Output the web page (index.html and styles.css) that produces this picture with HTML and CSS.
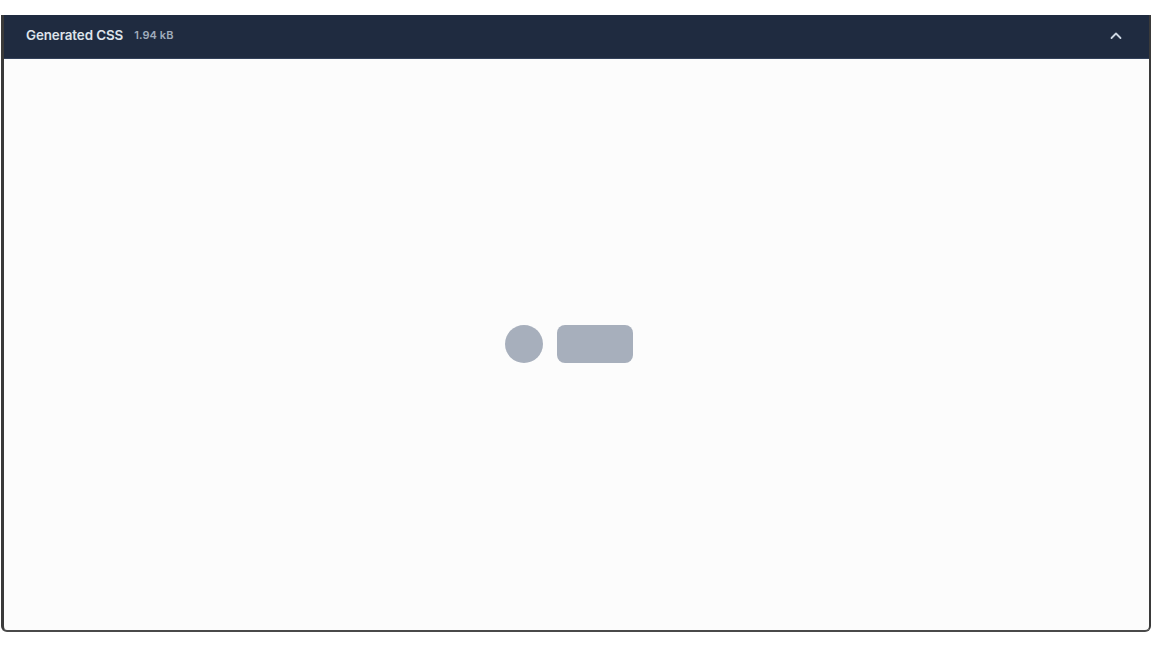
FILE: index.html
```html
<!DOCTYPE html>
<html lang="en">
<head>
  <meta charset="utf-8" />
  <title>Generated CSS</title>
  <link rel="stylesheet" href="styles.css">
</head>
<body>

<div class="panel">
  <div class="panel-head">
    <span class="title">Generated CSS</span>
    <span class="size">1.94 kB</span>
    <button class="toggle" aria-label="Collapse">
      <svg width="14" height="14" viewBox="0 0 14 14" fill="none">
        <path d="M2.5 9 L7 4.5 L11.5 9" stroke="#cbd5e1" stroke-width="1.8" stroke-linecap="round" stroke-linejoin="round"/>
      </svg>
    </button>
  </div>
  <div class="panel-body">
    <div class="loader">
      <span class="dot"></span>
      <span class="pill"></span>
    </div>
  </div>
</div>

</body>
</html>
```

FILE: styles.css
```css
html, body {
  margin: 0;
  background: #fff;
  font-family: Inter, "Noto Sans", sans-serif;
}

.panel {
  margin: 15px 1px 0 1px;
  height: 615px;
  display: flex;
  flex-direction: column;
  border-left: 3px solid #3a3a3a;
  border-right: 2px solid #3a3a3a;
  border-bottom: 2px solid #4a4a4a;
  border-radius: 0 0 6px 6px;
  overflow: hidden;
  background: #fcfcfc;
}

.panel-head {
  height: 44px;
  flex: none;
  display: flex;
  align-items: center;
  padding: 0 26px 3px 22px;
  background: #1f2b40;
  border-bottom: 1px solid #33415a;
  box-sizing: border-box;
}

.title {
  color: #dde3ea;
  font-size: 13.4px;
  font-weight: 600;
  letter-spacing: -0.1px;
}

.size {
  color: #a0abbb;
  font-size: 11px;
  font-weight: 600;
  letter-spacing: 0.1px;
  margin-left: 11px;
}

.toggle {
  margin-left: auto;
  margin-top: 2px;
  background: none;
  border: 0;
  padding: 0;
  width: 14px;
  height: 14px;
  cursor: pointer;
}

.panel-body {
  flex: 1;
  display: flex;
  align-items: center;
  justify-content: center;
}

.loader {
  display: flex;
  gap: 14px;
  margin: 0 16px 2px 0;
}

.dot {
  width: 38px;
  height: 38px;
  border-radius: 50%;
  background: #a7afbc;
}

.pill {
  width: 76px;
  height: 38px;
  border-radius: 8px;
  background: #a7afbc;
}
```
